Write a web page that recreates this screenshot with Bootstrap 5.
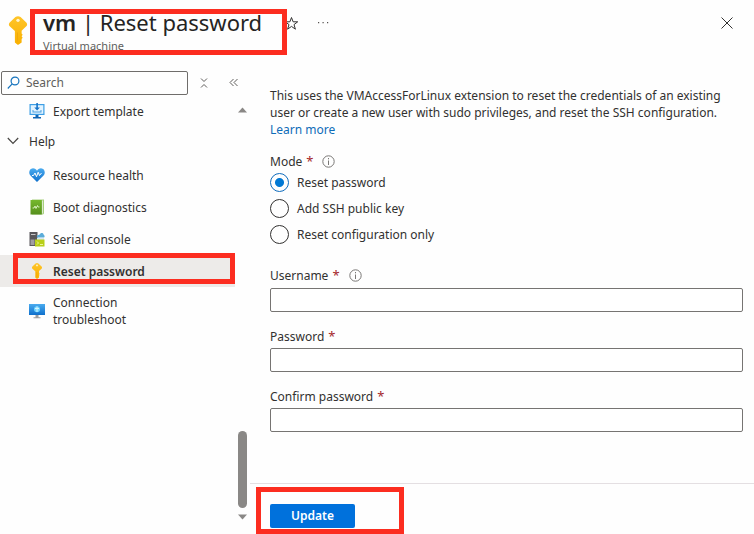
<!DOCTYPE html>
<html lang="en">
<head>
<meta charset="utf-8">
<meta name="viewport" content="width=device-width, initial-scale=1">
<title>vm | Reset password</title>
<link href="https://cdn.jsdelivr.net/npm/bootstrap@5.3.0/dist/css/bootstrap.min.css" rel="stylesheet">
<style>
body { font: 12px/17px "Noto Sans", "Open Sans", sans-serif; color: #323130; background: #fefefe; }
button { color: inherit; }
a { color: #0f6cb8; text-decoration: none; }
svg { display: block; flex: none; }
.blade-head { height: 68px; padding: 8px 20px 0 8px; }
.blade-title { font-size: 22px; line-height: 28px; font-weight: 400; color: #252423; }
.blade-title b { font-weight: 600; }
.blade-type { font-size: 11px; line-height: 20px; color: #605e5c; }
.head-key { margin-top: 8px; }
.head-text { width: 241px; margin-left: 15px; }
.head-tools { gap: 17px; height: 30px; }
.callout-box { position: absolute; border: 5px solid #fc2d20; pointer-events: none; }
.callout-title { inset: 1px -3px auto -13px; height: 46px; }
.callout-nav { inset: -2px 0 3px 13px; }
.callout-update { inset: -17px -49px -6px -14px; }
.side { width: 250px; }
.search-row { padding: 2px 0 0 1px; height: 27px; }
.search-box { width: 187px; height: 24px; border: 1px solid #6f6d6b; border-radius: 2px; padding-left: 5px; gap: 6px; }
.search-box input { width: 100%; border: 0; outline: 0; background: none; padding: 0; color: #605e5c; }
.search-box input::placeholder { color: #605e5c; }
.side-menu { width: 235px; margin-right: 3px; }
.side-link { height: 32px; padding-left: 29px; gap: 8px; color: #323130; }
.side-link.tall { height: 48px; }
.side-link.on { background: #edebe9; font-weight: 600; }
.side-group { height: 28px; padding-left: 7px; gap: 10px; }
.rail { width: 9px; padding: 12px 0 14px; }
.rail-thumb { width: 9px; height: 77px; border-radius: 5px; background: #8a8886; margin-bottom: 6px; }
.pane-body { padding: 19px 11px 51px 20px; }
.req { color: #a4262c; font-size: 13px; }
.mode-set { margin-top: 15px; }
.label-row { height: 17px; gap: 4px; }
.mode-set .label-row { height: 16px; }
.label-row svg { margin-left: 5px; }
.radio-row { height: 26px; gap: 8px; }
.radio-row input { appearance: none; width: 19px; height: 19px; margin: 0; border: 1px solid #323130; border-radius: 50%; }
.radio-row input:checked { border-color: #0f6cbd; background: radial-gradient(circle, #0078d4 4px, transparent 5px); }
.field-set { margin-top: 20px; }
.field-set + .field-set { margin-top: 16px; }
.field-set .text-field { width: 100%; height: 24px; margin-top: 4px; border: 1px solid #767472; border-radius: 2px; background: #fff; padding: 0 8px; display: block; }
.field-set + .field-set .text-field { margin-top: 3px; }
.pane-foot { border-top: 1px solid #e4dfe2; padding: 20px 20px 6px; }
.btn-update { width: 85px; height: 24px; padding: 0; border: 0; border-radius: 2px; background: #0071dc; color: #fff; font-size: 12px; line-height: 24px; font-weight: 600; }
</style>
<script src="https://cdn.jsdelivr.net/npm/bootstrap@5.3.0/dist/js/bootstrap.bundle.min.js"></script>
</head>
<body class="d-flex flex-column min-vh-100">
<svg width="0" height="0" class="position-absolute" aria-hidden="true">
  <defs>
    <linearGradient id="gold" x2="0" y2="1"><stop stop-color="#ffc52a"/><stop offset="1" stop-color="#f9b000"/></linearGradient>
    <linearGradient id="blue" x2="0" y2="1"><stop stop-color="#4aabef"/><stop offset="1" stop-color="#0f70cc"/></linearGradient>
    <linearGradient id="green" x2="0" y2="1"><stop stop-color="#76b82e"/><stop offset="1" stop-color="#568f1d"/></linearGradient>
    <symbol id="key" viewBox="0 0 18 28">
      <path fill="url(#gold)" d="M6.500 1Q9-.6 11.500 1L17 6.300Q18.600 8.200 17 10L12.500 14.200V17l1 1.200-1 1.400 1 1.400-1 1.300v3.200L9.700 27.500Q9 28 8.300 27.500L6 25.500V14.500L1 10Q-.6 8.200 1 6.300Z"/>
      <circle cx="9" cy="4.200" r="1.600" fill="#fff4cf"/><path stroke="#f0a90c" d="M8.500 16v8.500"/>
    </symbol>
  </defs>
</svg>

<header class="blade-head d-flex align-items-start">
  <svg class="head-key" width="20" height="29" aria-hidden="true"><use href="#key"/></svg>
  <div class="head-text position-relative">
    <h1 class="blade-title m-0 text-nowrap"><b>vm</b> | Reset password</h1>
    <div class="blade-type">Virtual machine</div>
    <span class="callout-box callout-title"></span>
  </div>
  <div class="head-tools d-flex align-items-center flex-grow-1">
    <button class="btn p-0 border-0" aria-label="Favorite"><svg width="15" height="15" viewBox="0 0 15 15" fill="none" stroke="#323130"><path d="m7.500 1.500 1.600 4.300h4.600L10 8.600l1.400 4.600-3.900-2.800-3.900 2.800L5 8.600 1.300 5.800h4.600Z"/></svg></button>
    <button class="btn p-0 border-0" aria-label="More"><svg width="14" height="14" fill="#55514f"><path d="M2 6h1.200v1.200H2zM6.500 6h1.200v1.200H6.500zM11 6h1.200v1.200H11z"/></svg></button>
    <button class="btn p-0 border-0 ms-auto" aria-label="Close"><svg width="14" height="14" fill="none" stroke="#323130"><path d="m1.500 1.500 11 11m0-11-11 11"/></svg></button>
  </div>
</header>

<div class="d-flex flex-grow-1">
  <aside class="side d-flex flex-column flex-shrink-0">
    <div class="search-row d-flex align-items-center">
      <label class="search-box d-flex align-items-center">
        <svg width="13" height="14" viewBox="0 0 13 14" fill="none" stroke="#1673bd" stroke-width="1.200"><circle cx="8" cy="5" r="3.900"/><path d="M5.200 7.900.8 12.500"/></svg>
        <input type="text" placeholder="Search" aria-label="Search">
      </label>
      <button class="btn p-0 border-0 ms-2" aria-label="Expand all"><svg width="16" height="14" fill="none" stroke="#605e5c"><path d="M5 2.500 8 5.500l3-3M5 11.500l3-3 3 3"/></svg></button>
      <button class="btn p-0 border-0 ms-3" aria-label="Collapse menu"><svg width="13" height="14" fill="none" stroke="#605e5c"><path d="M5.500 3 2 6.500 5.500 10M9.500 3 6 6.500 9.500 10"/></svg></button>
    </div>
    <div class="d-flex flex-grow-1">
      <nav class="side-menu d-flex flex-column">
        <a href="#" class="side-link d-flex align-items-center">
          <svg width="16" height="16" viewBox="0 0 16 16"><path fill="#0f65b4" d="M6.500 12h3v2H12v1.500H4V14h2.500z"/><path fill="#3d9ee5" d="M.5 1h15v11H.5z"/><path fill="#e2f3ff" d="M1.700 2.200h12.600v8.600H1.700z"/><path fill="#1673c8" d="M7.300 0h1.600v4.500h2L8.100 7.500 5.300 4.500h2z"/><path fill="#4a9fe0" d="M3.500 7h1v1.500h7V7h1v2.500h-9z"/></svg>
          Export template</a>
        <a href="#" class="side-group d-flex align-items-center text-reset">
          <svg width="12" height="8" fill="none" stroke="#484644" stroke-width="1.200"><path d="m.8 1 5.200 5.500L11.200 1"/></svg>
          Help</a>
        <a href="#" class="side-link d-flex align-items-center mt-1">
          <svg width="16" height="16" viewBox="0 0 16 16"><path fill="url(#blue)" d="M8 15 1.200 8.300C-.8 5.800.4 1.500 4 1.300c1.900 0 3.200.9 4 2.400.8-1.500 2.100-2.400 4-2.400 3.600.2 4.800 4.500 2.800 7Z"/><path fill="none" stroke="#fff" d="M3 8.500h1.500L6 6l1.500 3.700L9.200 5.200l1.300 3.300L12.500 6"/></svg>
          Resource health</a>
        <a href="#" class="side-link d-flex align-items-center">
          <svg width="16" height="16" viewBox="0 0 16 16"><path fill="#a7cf7e" d="M3 .5h12v14l-1 1H3z"/><path fill="#dcebcf" d="M13 1.500h1v13h-1z"/><path fill="url(#green)" d="M1.500 1h11.300v14.500H1.500z"/><path fill="none" stroke="#dff5c6" stroke-width=".9" d="M3.500 9H5l1-2 1 2.500L8.500 6.500l.5 1.500h1.500"/></svg>
          Boot diagnostics</a>
        <a href="#" class="side-link d-flex align-items-center">
          <svg width="16" height="16" viewBox="0 0 16 16"><path fill="#59575b" d="M.5 1h8v14h-8z"/><path stroke="#c8c6c8" d="M2 3.500h4.500"/><path fill="#a09da2" d="M1.500 8.500h4V14h-4z"/><path fill="#5bacd9" d="M8 6.500c-.5-2 1-3 2.500-2.800 1-2.500 4-2 4.200 0 1.500.8 1 2.800-.2 2.800z"/><path fill="#d9e8ef" d="M8 7h7v2H8z"/><path fill="#b8cf18" d="M6 8.500h9.500v7H6z"/><path fill="none" stroke="#edf49c" d="m8 10.500 1.500 1.500L8 13.500m3 0h3"/></svg>
          Serial console</a>
        <a href="#" class="side-link on d-flex align-items-center position-relative" aria-current="page">
          <svg width="16" height="16" aria-hidden="true"><use href="#key"/></svg>
          Reset password
          <span class="callout-box callout-nav"></span></a>
        <a href="#" class="side-link tall d-flex align-items-center">
          <svg width="16" height="16" viewBox="0 0 16 16"><path fill="#9c9da0" d="M6.500 12h3v2.200h2v1h-7v-1h2z"/><path fill="url(#blue)" d="M0 1h16v11H0z"/><circle cx="8" cy="6.300" r="3" fill="#70d4ff"/><path fill="none" stroke="#d4f5ff" d="M6 5.500h4M8 3.500v5.500"/></svg>
          <span>Connection<br>troubleshoot</span></a>
      </nav>
      <div class="rail d-flex flex-column align-items-center" aria-hidden="true">
        <svg width="9" height="6" fill="#8a8886"><path d="M0 5.500 4.500.5l4.500 5z"/></svg>
        <div class="rail-thumb mt-auto"></div>
        <svg width="9" height="6" fill="#8a8886"><path d="M0 .5h9l-4.500 5z"/></svg>
      </div>
    </div>
  </aside>

  <main class="flex-grow-1 d-flex flex-column">
    <form class="d-flex flex-column flex-grow-1">
      <div class="pane-body flex-grow-1">
        <p class="m-0">This uses the VMAccessForLinux extension to reset the credentials of an existing user or create a new user with sudo privileges, and reset the SSH configuration.<br><a href="#">Learn more</a></p>
        <div class="mode-set" role="radiogroup" aria-labelledby="mode-label">
          <div class="label-row d-flex align-items-center"><span id="mode-label">Mode</span><span class="req">*</span>
            <svg width="13" height="13" fill="none" stroke="#797775"><circle cx="6.500" cy="6.500" r="5.700"/><path d="M6.500 5.500V10M6.500 3v1.300"/></svg></div>
          <label class="radio-row d-flex align-items-center"><input type="radio" name="mode" checked>Reset password</label>
          <label class="radio-row d-flex align-items-center"><input type="radio" name="mode">Add SSH public key</label>
          <label class="radio-row d-flex align-items-center"><input type="radio" name="mode">Reset configuration only</label>
        </div>
        <div class="field-set">
          <label class="label-row d-flex align-items-center" for="user">Username<span class="req">*</span>
            <svg width="13" height="13" fill="none" stroke="#797775"><circle cx="6.500" cy="6.500" r="5.700"/><path d="M6.500 5.500V10M6.500 3v1.300"/></svg></label>
          <input class="text-field" id="user" type="text">
        </div>
        <div class="field-set">
          <label class="label-row d-flex align-items-center" for="pass">Password<span class="req">*</span></label>
          <input class="text-field" id="pass" type="password">
        </div>
        <div class="field-set">
          <label class="label-row d-flex align-items-center" for="confirm">Confirm password<span class="req">*</span></label>
          <input class="text-field" id="confirm" type="password">
        </div>
      </div>
      <div class="pane-foot">
        <div class="position-relative d-inline-block align-top">
          <button type="submit" class="btn btn-update">Update</button>
          <span class="callout-box callout-update"></span>
        </div>
      </div>
    </form>
  </main>
</div>
</body>
</html>
